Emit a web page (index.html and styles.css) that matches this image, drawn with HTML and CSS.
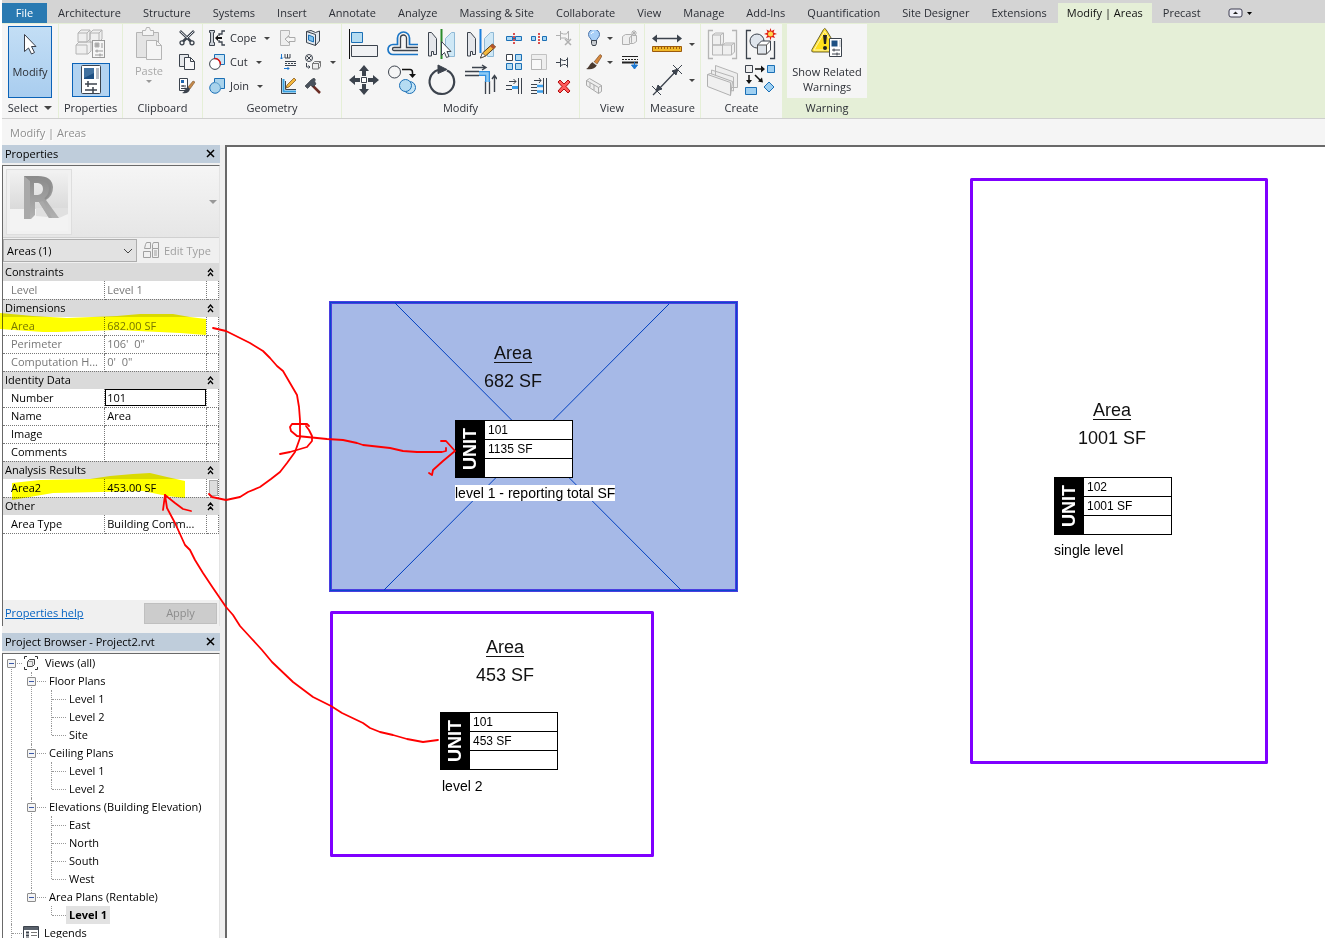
FILE: index.html
```html
<!DOCTYPE html>
<html lang="en">
<head>
    <meta charset="UTF-8">
    <meta name="viewport" content="width=device-width, initial-scale=1.0">
    <title>Project2.rvt</title>
    <link rel="stylesheet" href="styles.css">
</head>
<body>
<div class="app">
    <nav class="tabs">
        <a href="#" class="file">File</a>
        <a href="#">Architecture</a>
        <a href="#">Structure</a>
        <a href="#">Systems</a>
        <a href="#">Insert</a>
        <a href="#">Annotate</a>
        <a href="#">Analyze</a>
        <a href="#">Massing &amp; Site</a>
        <a href="#">Collaborate</a>
        <a href="#">View</a>
        <a href="#">Manage</a>
        <a href="#">Add-Ins</a>
        <a href="#">Quantification</a>
        <a href="#">Site Designer</a>
        <a href="#">Extensions</a>
        <a href="#" class="active">Modify | Areas</a>
        <a href="#">Precast</a>
        <button class="collapse" aria-label="Minimize ribbon">
            <svg width="26" height="10" viewBox="0 0 26 10"><rect x="1" y="1" width="13" height="8" rx="2" fill="#f0f0f8" stroke="#3c3c50"/><path d="M5 6h5L7.500 3.500z" fill="#222"/><path d="M19 4h5l-2.500 3z" fill="#000"/></svg>
        </button>
    </nav>

    <div class="ribbon">
        <section class="panel select">
            <div class="body">
                <button class="modify">
                    <svg width="32" height="32" viewBox="0 0 32 32"><path d="M10.500 7.500v17l4-3.500 3 6 3-1.500-3-6h4.500z" fill="#fff" stroke="#3a3f4a"/></svg>
                    <span>Modify</span>
                </button>
            </div>
            <h2>Select <i class="arrow big"></i></h2>
        </section>

        <section class="panel props">
            <div class="body large one">
                <button aria-label="Type Properties" disabled>
                    <svg width="32" height="32" viewBox="0 0 32 32"><g fill="#efefef" stroke="#b4b4b4"><path d="M3 5l3-3h9v9l-3 3H3zM15 5l3-3h9v9l-3 3h-9zM1 17l3-3h12v9l-3 3H1z"/><path d="M3 5h9v9M12 5l3-3M15 5h9v9M24 5l3-3M1 17h11v9" fill="none"/><rect x="17.500" y="12.500" width="12" height="17" fill="#f6f6f6" stroke="#999"/><path d="M20 15h4v4h-4z" fill="#aaa"/><path d="M27 15v5M20 23h8M22 21.500v3M20 27h8M25 25.500v3" stroke="#999"/></g></svg>
                </button>
                <button class="on" aria-label="Properties">
                    <svg width="32" height="32" viewBox="0 0 32 32"><rect x="6.500" y="1.500" width="19" height="28" rx="1" fill="#fff" stroke="#3c434d"/><path d="M9 4h10v11H9z" fill="#1e5083"/><path d="M9 4h10v5l-10 5z" fill="#41719f"/><path d="M21 4h3v11h-3z" fill="#b7bcc4"/><path d="M10 20h12M13 17v6M10 26h12M18 23v6" stroke="#3c434d" stroke-width="1.500"/></svg>
                </button>
            </div>
            <h2>Properties</h2>
        </section>

        <section class="panel clip">
            <div class="body">
                <button class="paste" disabled>
                    <svg width="32" height="36" viewBox="0 0 32 36"><path d="M3.500 6.500h22v25h-22z" fill="#e4e4e4" stroke="#b5b5b5"/><path d="M9.500 4.500h3l1-3h3l1 3h3v5h-11z" fill="#f4f4f4" stroke="#b5b5b5"/><path d="M13.500 14.500h10l5 5v14h-15z" fill="#f5f5f5" stroke="#b5b5b5"/><path d="M23.500 14.500v5h5" fill="none" stroke="#b5b5b5"/></svg>
                    <span>Paste</span>
                    <i class="arrow"></i>
                </button>
                <div class="small">
                    <button aria-label="Cut to clipboard"><svg width="16" height="16" viewBox="0 0 16 16"><path d="M1 1l11 10.500M15 1L4 11.500" stroke="#3c434d" stroke-width="2.600"/><path d="M1.500 1.500l7 6.500M14.500 1.500L8 8" stroke="#e6e9ee"/><circle cx="3" cy="12.800" r="2" fill="none" stroke="#3c434d" stroke-width="1.300"/><circle cx="13" cy="12.800" r="2" fill="none" stroke="#3c434d" stroke-width="1.300"/></svg></button>
                    <button aria-label="Copy to clipboard"><svg width="16" height="16" viewBox="0 0 16 16"><path d="M.5.500h9v12h-9z" fill="#e6e8eb" stroke="#3c434d"/><path d="M5.500 3.500h6l4 4v8h-10z" fill="#f7f7f9" stroke="#3c434d"/><path d="M11.500 3.500v4h4" fill="none" stroke="#3c434d"/></svg></button>
                    <button aria-label="Match type"><svg width="16" height="16" viewBox="0 0 16 16"><path d="M.5.500h8v12h-8z" fill="#fff" stroke="#3c434d"/><path d="M2 2h3v3H2z" fill="#1e66b0"/><path d="M2 8h5M2 10.500h5M4 7v2M6 9.500v2" stroke="#3c434d"/><path d="M9 9l5-6 2 1-5 7z" fill="#c58a4a" stroke="#6b4420" stroke-width=".5"/><path d="M3 15c3-1 3-5 6-6l2 2c-1 4-4 5-8 4z" fill="#3c434d"/></svg></button>
                </div>
            </div>
            <h2>Clipboard</h2>
        </section>

        <section class="panel geom">
            <div class="body">
                <div class="small named">
                    <button><svg width="16" height="16" viewBox="0 0 16 16"><path d="M.5.500h5v2h-1v10h1v3h-5v-3h1v-10h-1z" fill="#cdd2d8" stroke="#3c434d"/><path d="M16 1h-3v3h-3v2M10 10v2h3v3h3" fill="none" stroke="#3c434d" stroke-width="1.300"/><path d="M6 8l3-3v2h4v2H9v2z" fill="#111"/></svg>Cope<i class="arrow"></i></button>
                    <button><svg width="16" height="16" viewBox="0 0 16 16"><path d="M5.500.500h10v10h-10z" fill="#c9e4f5" stroke="#1b6fb5"/><circle cx="6" cy="10" r="5.400" fill="#fff" stroke="#3c434d"/><path d="M5.500 4.600a5.400 5.400 0 0 1 5.900 5.900" fill="none" stroke="#e01010" stroke-width="1.400"/></svg>Cut<i class="arrow"></i></button>
                    <button><svg width="16" height="16" viewBox="0 0 16 16"><path d="M5.500.500h10v10h-4a5.400 5.400 0 1 1-6-6z" fill="#a9d3ec" stroke="#1b6fb5"/><path d="M5.500 4.600a5.400 5.400 0 0 1 5.900 5.900" fill="none" stroke="#5a9fcb"/></svg>Join<i class="arrow"></i></button>
                </div>
                <div class="small">
                    <button aria-label="Join roof" disabled><svg width="16" height="16" viewBox="0 0 16 16"><path d="M.5.500h9v4l-3 3.500 3 4v3.500h-9z" fill="#eee" stroke="#b5b5b5"/><path d="M5 9l4-3v1.500h6v4H9V13z" fill="#f5f5f5" stroke="#aaa"/></svg></button>
                    <button aria-label="Beam joins"><svg width="16" height="16" viewBox="0 0 16 16"><path d="M1.500 0v5M0 3.500L1.500 5 3 3.500M4 14.500h5M7.500 13L9 14.500 7.500 16" fill="none" stroke="#1b76d0"/><path d="M5 0v4h5V0M7.500 0v4M5 7.500h11M5 11.500h11" fill="none" stroke="#3c434d"/><path d="M5 9.500h11" stroke="#3c434d" stroke-dasharray="2 1"/></svg></button>
                    <button aria-label="Wall joins"><svg width="16" height="16" viewBox="0 0 16 16"><path d="M1.500 0v15.500H16M5.500 3v8.500H16" fill="none" stroke="#3c434d"/><path d="M3.500 1v12.500H16" fill="none" stroke="#36a0e0" stroke-width="2"/><path d="M6 10l1-3 7-7 2 2-7 7z" fill="#f5b83c" stroke="#7a4b10" stroke-width=".7"/></svg></button>
                </div>
                <div class="small">
                    <button aria-label="Split face"><svg width="16" height="16" viewBox="0 0 16 16"><path d="M1.500 1.500l9 3v11l-9-3zM1.500 1.500L6 .5l4.500 2 4-1.500v10l-4 4.500" fill="#e2e8ef" stroke="#3c434d"/><path d="M3.500 5l5 2v5l-5-2z" fill="#7cc0ee" stroke="#1b6fb5"/></svg></button>
                    <button aria-label="Paint"><svg width="16" height="16" viewBox="0 0 16 16"><circle cx="4" cy="4" r="3.500" fill="#eee" stroke="#3c434d"/><path d="M2 2l4 4M6 2L2 6M1.500 9v4H5M3.500 11.500L5 13l-1.500 1.500" fill="none" stroke="#3c434d"/><path d="M7.500 9.500l2-2h6v5l-2 2.500h-6z" fill="#eee" stroke="#777"/><path d="M7.500 9.500h6v5M13.500 9.500l2-2" fill="none" stroke="#777"/></svg></button>
                    <button aria-label="Demolish"><svg width="16" height="16" viewBox="0 0 16 16"><path d="M7 7l8 8" stroke="#6b2d25" stroke-width="2.500"/><path d="M0 8l6-6 3-2 1.500 2-1 1 1.500 3-3 3-2-2-3.500 3.500z" fill="#4a525c" stroke="#2c3138" stroke-width=".6"/></svg></button>
                </div>
                <div class="small drop">
                    <span></span>
                    <button aria-label="More paint"><i class="arrow"></i></button>
                </div>
            </div>
            <h2>Geometry</h2>
        </section>

        <section class="panel edit">
            <div class="body">
                <div class="large four">
                    <button aria-label="Align"><svg width="32" height="32" viewBox="0 0 32 32"><path d="M1.500 1v30" stroke="#111"/><path d="M3.500 4.500h11v10h-11z" fill="#b5dcf2" stroke="#1b6fb5"/><path d="M3.500 17.500h26v11h-26z" fill="#f0f1f3" stroke="#3c434d"/></svg></button>
                    <button aria-label="Offset"><svg width="32" height="32" viewBox="0 0 32 32"><path d="M31 26.500H6a5 5 0 0 1 0-10h4.500V10a6 6 0 0 1 12 0v6.500H31" fill="none" stroke="#1b76c6" stroke-width="1.700"/><path d="M31 22.500H7c-2 0-2-3 0-3h6.500V10a2.700 2.700 0 0 1 6 0v9.500H31" fill="none" stroke="#3c434d" stroke-width="1.300"/></svg></button>
                    <button aria-label="Mirror - Pick Axis"><svg width="32" height="32" viewBox="0 0 32 32"><path d="M2.500 4.500h3l5 6v16h-3v-3h-2v4.500h-3z" fill="#e4e6ea" stroke="#3c434d"/><path d="M28.500 4.500h-3l-6 6v16h3v2h6z" fill="#cfe8f6" stroke="#8fb9d6"/><path d="M15.500 1v30" stroke="#2b8c2b" stroke-width="2"/><path d="M15.500 13.500v14l3-3 2 5 2.500-1-2-5h4z" fill="#fff" stroke="#3c434d"/></svg></button>
                    <button aria-label="Mirror - Draw Axis"><svg width="32" height="32" viewBox="0 0 32 32"><path d="M2.500 4.500h3l5 6v16h-3v-3h-2v4.500h-3z" fill="#e4e6ea" stroke="#3c434d"/><path d="M28.500 4.500h-3l-6 6v16h3v2h6z" fill="#cfe8f6" stroke="#8fb9d6"/><path d="M15.500 1v24" stroke="#1b7fdc" stroke-width="2"/><path d="M15.500 30l2-5 10-9 3 3-10 9z" fill="#f5b83c" stroke="#54381a"/><path d="M25 18l3 3 2.500-2-3-3z" fill="#b2532e"/><path d="M15.500 30l2-5 3 3z" fill="#fff" stroke="#333" stroke-width=".7"/></svg></button>
                    <button aria-label="Move"><svg width="32" height="32" viewBox="0 0 32 32"><path d="M16 1l5 6h-3v5h-4V7h-3zM16 31l5-6h-3v-5h-4v5h-3zM1 16l6-5v3h5v4H7v3zM31 16l-6-5v3h-5v4h5v3z" fill="#3c434d"/><path d="M13.500 13.500h5v5h-5z" fill="#fff" stroke="#3c434d"/></svg></button>
                    <button aria-label="Copy"><svg width="32" height="32" viewBox="0 0 32 32"><circle cx="7.500" cy="8" r="6" fill="#f5f5f5" stroke="#3c434d"/><path d="M15 5.500h8q2.500 0 2.500 3v3" fill="none" stroke="#111" stroke-width="1.500"/><path d="M22 10h7l-3.500 4z" fill="#111"/><circle cx="22.500" cy="23.500" r="6" fill="#c5e5f6" stroke="#1b6fb5"/><circle cx="18.500" cy="21.500" r="6" fill="#b5dcf2" stroke="#1b6fb5"/></svg></button>
                    <button aria-label="Rotate"><svg width="32" height="32" viewBox="0 0 32 32"><path d="M12 6a12.300 12.300 0 1 0 9 .5" fill="none" stroke="#3c434d" stroke-width="2.200"/><path d="M12 1l9 4.500-9 4z" fill="#3c434d" stroke="#3c434d"/></svg></button>
                    <button aria-label="Trim/Extend to Corner"><svg width="32" height="32" viewBox="0 0 32 32"><path d="M7 3.500h14M17 1l4 2.500L17 6M29.500 28V12M27 15l2.500-3.500L32 15" fill="none" stroke="#3c434d" stroke-width="1.400"/><path d="M0 7.500h14M0 11.500h14M20.500 17v13M24.500 17v13" stroke="#3c434d" stroke-width="1.300"/><path d="M14 9.500h8.500V18" fill="none" stroke="#2f8fe0" stroke-width="5"/><path d="M14 9.500h8.500V18" fill="none" stroke="#8ecbf5" stroke-width="2.500"/></svg></button>
                </div>
                <div class="small three">
                    <button aria-label="Split Element"><svg width="16" height="16" viewBox="0 0 16 16"><path d="M.5 6.500h6v4h-6zM9.500 6.500h6v4h-6z" fill="#a9d8f5" stroke="#1b6fb5"/><path d="M6 8.500h4" stroke="#1b6fb5"/><path d="M8 3v11" stroke="#d01818" stroke-width="1.500" stroke-dasharray="2 1"/></svg></button>
                    <button aria-label="Split with Gap"><svg width="16" height="16" viewBox="0 0 16 16"><path d="M.5 6.500h4v4h-4zM11.500 6.500h4v4h-4z" fill="#a9d8f5" stroke="#1b6fb5"/><path d="M8 3v11" stroke="#d01818" stroke-width="1.500" stroke-dasharray="2 1"/></svg></button>
                    <button aria-label="Unpin" disabled><svg width="16" height="16" viewBox="0 0 16 16"><path d="M0 5.500h4M4.500 1v9M4.500 3l3 1h3l2-3v9l-3-2h-5" fill="none" stroke="#b0b0b0"/><path d="M9 9l6 6M15 9l-6 6" stroke="#b0b0b0" stroke-width="1.500"/></svg></button>
                    <button aria-label="Array"><svg width="16" height="16" viewBox="0 0 16 16"><path d="M.5.500h6v6h-6z" fill="#fff" stroke="#3c434d"/><path d="M9.500.500h6v6h-6zM.5 9.500h6v6h-6zM9.500 9.500h6v6h-6z" fill="#b5dcf2" stroke="#1b6fb5"/></svg></button>
                    <button aria-label="Scale" disabled><svg width="16" height="16" viewBox="0 0 16 16"><path d="M.5.500h15v15H.5z" fill="#eee" stroke="#c2c2c2"/><path d="M.5 5.500h10v10h-10z" fill="#f8f8f8" stroke="#b5b5b5"/></svg></button>
                    <button aria-label="Pin"><svg width="16" height="16" viewBox="0 0 16 16"><path d="M0 8.500h4M4.500 4v9M4.500 5.500l3 1h2l2-2v8l-2-2h-2l-3 1M11.500 3.500v10" fill="none" stroke="#3c434d"/></svg></button>
                    <button aria-label="Trim Single"><svg width="16" height="16" viewBox="0 0 16 16"><path d="M3 3.500h7M7.500 1L10 3.500 7.500 6M0 7.500h6M0 11.500h6M12.500 0v16M15.500 0v16" fill="none" stroke="#3c434d"/><path d="M6 9.500h6" stroke="#3ba0ee" stroke-width="3"/></svg></button>
                    <button aria-label="Trim Multiple"><svg width="16" height="16" viewBox="0 0 16 16"><path d="M3 2.500h7M8 0l2 2.500L8 5M0 6.500h6M0 9.500h6M0 12.500h6M0 15.500h6M12.500 0v16M15.500 0v16" fill="none" stroke="#3c434d"/><path d="M6 8h6M6 13.500h6" stroke="#3ba0ee" stroke-width="2.500"/></svg></button>
                    <button aria-label="Delete"><svg width="16" height="16" viewBox="0 0 16 16"><path d="M2 4l2-2 4 4 4-4 2 2-4 4.500 4 4.500-2 2-4-4-4 4-2-2 4-4.500z" fill="#ff5a5a" stroke="#b01010"/></svg></button>
                </div>
            </div>
            <h2>Modify</h2>
        </section>

        <section class="panel view">
            <div class="body">
                <div class="small">
                    <button aria-label="Hide in View"><svg width="16" height="16" viewBox="0 0 16 16"><path d="M5.500 10.500c0-2-3-3-3-6a5 4.800 0 0 1 11 0c0 3-3 4-3 6z" fill="#a8cff7" stroke="#4a72a8"/><path d="M5 4q1-2 3-2" stroke="#fff" fill="none"/><path d="M5.500 10.500h5v3l-1 2h-3l-1-2z" fill="#c7cbd0" stroke="#3c434d"/></svg><i class="arrow"></i></button>
                    <button aria-label="Override Graphics"><svg width="16" height="16" viewBox="0 0 16 16"><path d="M8 8l6-7.500L16 2l-5 8z" fill="#d6893e" stroke="#6b3a14" stroke-width=".6"/><path d="M0 15c3-1 3-5 7-7l4 3c-2 4-6 5-11 4z" fill="#4a3a30"/><path d="M7 8l4 3" stroke="#ddd" stroke-width="1.500"/></svg><i class="arrow"></i></button>
                    <button aria-label="Displace" disabled><svg width="16" height="16" viewBox="0 0 16 16"><path d="M.5 2.500l3-2 12 7v6l-3 2-12-8z" fill="#eee" stroke="#aaa"/><path d="M.5 2.500l12 7v6M12.500 9.500l3-2M4 5v4M8 7v5" fill="none" stroke="#aaa"/></svg></button>
                </div>
                <div class="small">
                    <button aria-label="Selection Box" disabled><svg width="16" height="16" viewBox="0 0 16 16"><path d="M.5 6.500l3-2h6v8l-2 2h-7zM7.500 7.500l3-2h4v6l-3 2h-4z" fill="#eee" stroke="#b0b0b0"/><path d="M12 0v6M9 3h6M10 1l4 4M14 1l-4 4" stroke="#b0b0b0"/></svg></button>
                    <button aria-label="Linework"><svg width="16" height="16" viewBox="0 0 16 16"><path d="M0 2.500h16" stroke="#222"/><path d="M0 5.500h16" stroke="#222" stroke-dasharray="2 1"/><path d="M0 8.500h16" stroke="#222" stroke-width="2"/><path d="M12.500 8v6M9.500 11l3 4 3-4z" fill="#1b76d0" stroke="#1b76d0"/></svg></button>
                </div>
            </div>
            <h2>View</h2>
        </section>

        <section class="panel measure">
            <div class="body large one">
                <button aria-label="Measure"><svg width="32" height="32" viewBox="0 0 32 32"><path d="M3 10.500h26" stroke="#3c434d" stroke-width="1.500"/><path d="M1 10.500l5-4v8zM31 10.500l-5-4v8z" fill="#3c434d"/><path d="M1.500 18.500h29v5h-29z" fill="#f0b829" stroke="#9c5a0c"/><path d="M4.500 19v2M7.500 19v2M10.500 19v2M13.500 19v2M16.500 19v2M19.500 19v2M22.500 19v2M25.500 19v2M28.500 19v2" stroke="#9c5a0c"/></svg><i class="arrow"></i></button>
                <button aria-label="Aligned Dimension"><svg width="32" height="32" viewBox="0 0 32 32"><path d="M1 22l9 9M22 1l9 9" stroke="#3c434d"/><path d="M7 26L26 6M2 31l5-5" stroke="#3c434d" stroke-width="1.300"/><path d="M5 27l2-6 4 4zM27 5l-2 6-4-4zM26 6l5-5" fill="#3c434d" stroke="#3c434d"/></svg><i class="arrow"></i></button>
            </div>
            <h2>Measure</h2>
        </section>

        <section class="panel create">
            <div class="body large two">
                <button aria-label="Create Assembly" disabled><svg width="32" height="32" viewBox="0 0 32 32"><path d="M7 2.500H2.500v28H7M26 2.500h4.500v28H26" fill="none" stroke="#b5b5b5" stroke-width="1.300"/><path d="M6.500 7l3-2h8v9l-1 3h-10zM6.500 17h10v10h-10zM16.500 17l3-2h9v9l-3 3h-9z" fill="#efefef" stroke="#b5b5b5"/><path d="M6.500 7h8v10M14.500 7l3-2M16.500 17h9v10M25.500 17l3-2" fill="none" stroke="#b5b5b5"/></svg></button>
                <button aria-label="Create Group"><svg width="32" height="32" viewBox="0 0 32 32"><path d="M6 2.500H1.500v28H6M25 30.500h4.500V13" fill="none" stroke="#3c434d" stroke-width="1.300"/><circle cx="12" cy="13" r="7" fill="#dfe5ec" stroke="#3c434d"/><path d="M12.500 17l4-4h9v9l-4 4h-9z" fill="#fff" stroke="#3c434d"/><path d="M21.500 17v9h-9v-9z" fill="#dfe4ea" stroke="#555"/><path d="M21.500 17l4-4" stroke="#555"/><path d="M25.500 0l1 3 3-1.500-1 3L32 6l-3.500 1 1.500 3-3.500-1-1 3.500-1-3.500-3.500 1 1.500-3L19 6l3.500-1.500-1-3 3 1.500z" fill="#e01c10"/><circle cx="25.500" cy="6" r="2.500" fill="#ffd64a"/></svg></button>
                <button aria-label="Create Parts" disabled><svg width="32" height="32" viewBox="0 0 32 32"><path d="M9.500 1.500l22 8v14h-22zM5.500 6l22 7v14l-22-6z" fill="#eee" stroke="#b5b5b5"/><path d="M1.500 10.500l3-1 22 8-2 14-23-9z" fill="#f0f0f0" stroke="#b0b0b0"/><path d="M1.500 10.500l23 8v13" fill="none" stroke="#b0b0b0"/></svg></button>
                <button aria-label="Create Similar"><svg width="32" height="32" viewBox="0 0 32 32"><path d="M.5 1.500h7v7h-7z" fill="#eee" stroke="#3c434d"/><path d="M22.500 1.500h7v7h-7zM.5 23.500h11v7h-11zM24 18l5 5-5 5-5-5z" fill="#9fd0f2" stroke="#1b6fb5"/><path d="M10 5h8M4 11v6M10 11l5 5" stroke="#111" stroke-width="1.500"/><path d="M20 5l-4-3.500v7zM4 20l-3-4h6zM18 18.500l-5-1 4-4z" fill="#111"/></svg></button>
            </div>
            <h2>Create</h2>
        </section>

        <section class="panel warning">
            <div class="body">
                <button class="warn">
                    <svg width="32" height="32" viewBox="0 0 32 32"><path d="M12.500 3.500q1-2 2.500 0l12 20q.5 2.500-1.500 2.500H2q-2 0-1-2.500z" fill="#ffe12e" stroke="#6b6330"/><path d="M13.700 5.500L25 24H3z" fill="#ffdf1c" stroke="#fff6b0"/><path d="M12 9h4l-1 9h-2z" fill="#222"/><circle cx="14" cy="22" r="2" fill="#222"/><path d="M18.500 12.500h12v18h-12z" fill="#fff" stroke="#3c434d"/><path d="M20.500 14.500h6v6h-6z" fill="#1e5083"/><path d="M29 14v7" stroke="#b7bcc4"/><path d="M21 24h8M23 22.500v3M21 28h8M26 26.500v3" stroke="#3c434d"/></svg>
                    <span>Show Related<br>Warnings</span>
                </button>
            </div>
            <h2>Warning</h2>
        </section>
    </div>

    <div class="options">Modify | Areas</div>

    <div class="workspace">
        <aside class="sidebar">
            <section class="palette">
                <header><h3>Properties</h3><button aria-label="Close properties"><svg width="10" height="10" viewBox="0 0 10 10"><path d="M1 1l7 7M8 1L1 8" stroke="#000" stroke-width="1.500"/></svg></button></header>
                <div class="frame">
                    <button class="type" aria-label="Type selector">
                        <svg class="thumb" width="66" height="66" viewBox="0 0 66 66">
                            <defs>
                                <linearGradient id="wall" x1="0" y1="0" x2="0" y2="1"><stop offset="0" stop-color="#f0f0f0"/><stop offset="1" stop-color="#dadada"/></linearGradient>
                                <linearGradient id="face" x1="0" y1="0" x2="0" y2="1"><stop offset="0" stop-color="#8a8a8a"/><stop offset="1" stop-color="#b2b2b2"/></linearGradient>
                            </defs>
                            <rect x=".5" y=".5" width="65" height="65" fill="#f1f1f1" stroke="#dedede"/>
                            <path d="M4 4h58v36H4z" fill="url(#wall)"/>
                            <path d="M4 40h58v22H4z" fill="#f3f3f3"/>
                            <path d="M30 47l23 2 9-4v-6H30z" fill="#e0e0e0"/>
                            <path d="M18 7h14q14 0 15 11 0 9-7 13l13 18H43L33 33h-4v13l-4 4h-7zM28 14v12h4q5-1 5-6 0-5-5-6z" fill="url(#face)" fill-rule="evenodd"/>
                            <path d="M18 7l6 5v38h-6zM33 33l4-1 9 17h-3z" fill="#a9a9a9"/>
                            <path d="M24 12l8-2q12 1 12 9 0 7-5 11" fill="none" stroke="#8e8e8e" stroke-width="2"/>
                        </svg>
                        <i class="arrow big"></i>
                    </button>
                    <div class="filter">
                        <div class="dropdown">
                            <select aria-label="Selection filter"><option>Areas (1)</option></select>
                            <svg width="10" height="6" viewBox="0 0 10 6"><path d="M1 1l4 4 4-4" fill="none" stroke="#444"/></svg>
                        </div>
                        <button class="edit-type" disabled><svg width="17" height="17" viewBox="0 0 17 17"><path d="M2.500 2.500l1-2h4v6h-6zM9.500 2.500l1-2h5v6h-6zM.5 9.500h7v6h-7z" fill="none" stroke="#a0a0a0"/><path d="M9.500 6.500h6v9h-6z" fill="#f0f0f0" stroke="#a0a0a0"/><path d="M11 9h3M11 11h3M11 13h3" stroke="#a0a0a0"/></svg>Edit Type</button>
                    </div>
                    <div class="rows">
                        <table>
                            <tbody>
                                <tr class="group"><th colspan="2">Constraints</th><td><svg width="7" height="9" viewBox="0 0 7 9"><path d="M1 4l2.500-3L6 4M1 8l2.500-3L6 8" fill="none" stroke="#000" stroke-width="1.300"/></svg></td></tr>
                                <tr class="locked"><th>Level</th><td>Level 1</td><td></td></tr>
                                <tr class="group"><th colspan="2">Dimensions</th><td><svg width="7" height="9" viewBox="0 0 7 9"><path d="M1 4l2.500-3L6 4M1 8l2.500-3L6 8" fill="none" stroke="#000" stroke-width="1.300"/></svg></td></tr>
                                <tr class="locked"><th>Area</th><td>682.00 SF</td><td></td></tr>
                                <tr class="locked"><th>Perimeter</th><td>106'&nbsp; 0"</td><td></td></tr>
                                <tr class="locked"><th>Computation H...</th><td>0'&nbsp; 0"</td><td></td></tr>
                                <tr class="group"><th colspan="2">Identity Data</th><td><svg width="7" height="9" viewBox="0 0 7 9"><path d="M1 4l2.500-3L6 4M1 8l2.500-3L6 8" fill="none" stroke="#000" stroke-width="1.300"/></svg></td></tr>
                                <tr><th><label for="number">Number</label></th><td class="editing"><input id="number" type="text" value="101"></td><td></td></tr>
                                <tr><th>Name</th><td>Area</td><td></td></tr>
                                <tr><th>Image</th><td></td><td></td></tr>
                                <tr><th>Comments</th><td></td><td></td></tr>
                                <tr class="group"><th colspan="2">Analysis Results</th><td><svg width="7" height="9" viewBox="0 0 7 9"><path d="M1 4l2.500-3L6 4M1 8l2.500-3L6 8" fill="none" stroke="#000" stroke-width="1.300"/></svg></td></tr>
                                <tr><th>Area2</th><td>453.00 SF</td><td><button class="assoc" aria-label="Associate parameter"></button></td></tr>
                                <tr class="group"><th colspan="2">Other</th><td><svg width="7" height="9" viewBox="0 0 7 9"><path d="M1 4l2.500-3L6 4M1 8l2.500-3L6 8" fill="none" stroke="#000" stroke-width="1.300"/></svg></td></tr>
                                <tr><th>Area Type</th><td>Building Comm...</td><td></td></tr>
                            </tbody>
                        </table>
                    </div>
                    <div class="foot"><a href="#">Properties help</a><button disabled>Apply</button></div>
                </div>
            </section>

            <section class="palette browser">
                <header><h3>Project Browser - Project2.rvt</h3><button aria-label="Close project browser"><svg width="10" height="10" viewBox="0 0 10 10"><path d="M1 1l7 7M8 1L1 8" stroke="#000" stroke-width="1.500"/></svg></button></header>
                <div class="frame">
                    <ul class="tree">
                        <li>
                            <div class="node"><button class="toggle" aria-label="Collapse"></button><svg width="16" height="16" viewBox="0 0 16 16"><path d="M4 1.500H1.500V4M12 1.500h2.500V4M4 14.500H1.500V12M12 14.500h2.500V12" fill="none" stroke="#333"/><path d="M4.500 6.500l2-2h5v5l-2 2h-5z" fill="#eee" stroke="#444"/><path d="M4.500 6.500h5v5" fill="none" stroke="#999"/></svg>Views (all)</div>
                            <ul>
                                <li>
                                    <div class="node"><button class="toggle" aria-label="Collapse"></button>Floor Plans</div>
                                    <ul>
                                        <li><a href="#">Level 1</a></li>
                                        <li><a href="#">Level 2</a></li>
                                        <li><a href="#">Site</a></li>
                                    </ul>
                                </li>
                                <li>
                                    <div class="node"><button class="toggle" aria-label="Collapse"></button>Ceiling Plans</div>
                                    <ul>
                                        <li><a href="#">Level 1</a></li>
                                        <li><a href="#">Level 2</a></li>
                                    </ul>
                                </li>
                                <li>
                                    <div class="node"><button class="toggle" aria-label="Collapse"></button>Elevations (Building Elevation)</div>
                                    <ul>
                                        <li><a href="#">East</a></li>
                                        <li><a href="#">North</a></li>
                                        <li><a href="#">South</a></li>
                                        <li><a href="#">West</a></li>
                                    </ul>
                                </li>
                                <li>
                                    <div class="node"><button class="toggle" aria-label="Collapse"></button>Area Plans (Rentable)</div>
                                    <ul>
                                        <li><a href="#" class="current">Level 1</a></li>
                                    </ul>
                                </li>
                            </ul>
                        </li>
                        <li>
                            <div class="node leaf"><svg width="16" height="16" viewBox="0 0 16 16"><path d="M.5 1.500h15v14H.5z" fill="#fff" stroke="#3c434d"/><path d="M1 2h14v3H1z" fill="#5a626c"/><path d="M3 7.500h3M3 10.500h3M3 13.500h3" stroke="#3c434d" stroke-width="2"/><path d="M8 7.500h6M8 10.500h6M8 13.500h6" stroke="#777"/></svg>Legends</div>
                        </li>
                    </ul>
                </div>
            </section>
        </aside>

        <main class="canvas">
            <svg class="plan" width="100%" height="100%">
                <rect x="103.500" y="155.500" width="406" height="288" fill="#a6b9e7" stroke="#4a3fe0" stroke-width="3"/>
                <rect x="103.500" y="155.500" width="406" height="288" fill="none" stroke="#0a46cc"/>
                <path d="M168 156l286 287M442 157L157 443" stroke="#0040c0" fill="none"/>
                <rect x="104.500" y="465.500" width="321" height="243" fill="none" stroke="#7f00ff" stroke-width="3" stroke-linejoin="round"/>
                <rect x="744.500" y="32.500" width="295" height="583" fill="none" stroke="#7f00ff" stroke-width="3" stroke-linejoin="round"/>
            </svg>

            <div class="room room-a"><u>Area</u><br>682 SF</div>
            <div class="tag tag-a">
                <b>UNIT</b>
                <span>101</span><span>1135 SF</span><span></span>
            </div>
            <p class="note note-a">level 1 - reporting total SF</p>

            <div class="room room-b"><u>Area</u><br>453 SF</div>
            <div class="tag tag-b">
                <b>UNIT</b>
                <span>101</span><span>453 SF</span><span></span>
            </div>
            <p class="note note-b">level 2</p>

            <div class="room room-c"><u>Area</u><br>1001 SF</div>
            <div class="tag tag-c">
                <b>UNIT</b>
                <span>102</span><span>1001 SF</span><span></span>
            </div>
            <p class="note note-c">single level</p>
        </main>
    </div>

    <!-- highlighter and red pen -->
    <svg class="markup highlight" width="100%" height="100%">
        <path d="M0 313L33 316 67 318 117 316 140 314 173 314 190 317 206 319V335L180 333 117 330 57 332 43 332 0 329zM12 483L40 480 90 479 110 476 133 474 150 473 167 477 185 481V498L167 496 143 491 100 492 53 493 12 500z" fill="#ff0"/>
    </svg>
    <svg class="markup" width="100%" height="100%">
        <g fill="none" stroke="#f00" stroke-width="1.800" stroke-linejoin="round" stroke-linecap="round">
            <path d="M213 328L226 331 238 337 250 343 263 351 270 358 277 366 283 371 290 383 297 395 299 407 300 420 300 438 295 452 287 463 280 472 271 479 260 487 248 492 240 497 226 500 212 497 209 494"/>
            <path d="M280 454L290 452 307 447 312 441 312 436 309 430 306 426"/>
            <path d="M309 426L307 424 292 424 290 427 291 431 297 436 317 438 327 439 343 440 357 443 363 445 390 448 403 451 417 452 442 452 446 451V448"/>
            <path d="M441 441L446 441 455 451 443 461 433 470 432 475 429 473"/>
            <path d="M438 740L423 742 407 739 393 735 380 732 370 728 363 723 342 713 331 706 313 697 293 682 272 662 262 650 251 638 240 626 233 615 226 607 213 588 203 573 195 560 190 550 185 545 175 523 167 508 165 495"/>
            <path d="M163 510L165 495 175 503 183 509 191 511"/>
        </g>
    </svg>
</div>
</body>
</html>
```
FILE: styles.css
```css
* {
    box-sizing: border-box;
}
body {
    margin: 0;
    font-family: "Open Sans", "Noto Sans", sans-serif;
    font-size: 11px;
    line-height: 18px;
    color: #000;
    background: #fff;
}
h2, h3, p, ul {
    margin: 0;
    padding: 0;
    font-size: 11px;
    font-weight: normal;
}
button, input, select {
    font: inherit;
    color: inherit;
    background: none;
    border: none;
    padding: 0;
    margin: 0;
}
svg {
    display: block;
    flex: none;
}
.app {
    position: relative;
    display: flex;
    flex-direction: column;
    height: 100vh;
    overflow: hidden;
    padding-left: 2px;
}

/* ribbon tabs */
.tabs {
    display: flex;
    align-items: flex-end;
    height: 23px;
    background: #d4d4d4;
}
.tabs a {
    padding: 0 11px;
    line-height: 20px;
    color: #2c2f36;
    text-decoration: none;
    white-space: nowrap;
}
.tabs .file {
    width: 45px;
    padding: 0;
    text-align: center;
    color: #fff;
    background: #2a7ab2;
}
.tabs .active {
    padding: 0 9px;
    background: #e5efd7;
    color: #111;
}
.collapse {
    height: 20px;
    margin-left: 16px;
}

/* ribbon */
.ribbon {
    display: flex;
    height: 95px;
    background: #e5efd7;
}
.panel {
    display: flex;
    flex-direction: column;
    flex: none;
    padding-top: 2px;
    background: #f5f5f5;
    border-right: 1px solid #e5efd7;
    border-top: 1px solid #e5efd7;
}
.panel h2 {
    display: flex;
    align-items: center;
    justify-content: center;
    height: 20px;
    color: #2c2f36;
}
.panel .body {
    display: flex;
    justify-content: center;
    height: 72px;
}
.panel button {
    display: flex;
    align-items: center;
    color: #2c2f36;
}
.panel button:disabled {
    color: #a8a8a8;
}
.arrow {
    border: 3px solid transparent;
    border-top-color: #444;
    border-bottom: none;
}
.arrow.big {
    border-width: 4px 4px 0;
    margin-left: 6px;
}
.small {
    display: grid;
    grid-template-rows: repeat(3, 24px);
    align-content: start;
}
.panel .large {
    display: grid;
    grid-auto-rows: 36px;
    align-items: center;
    justify-content: center;
    gap: 0 7px;
}
.large.two {
    grid-template-columns: repeat(2, 32px);
}
.large.four {
    grid-template-columns: repeat(4, 32px);
}
.select {
    width: 57px;
}
.panel .modify {
    flex-direction: column;
    justify-content: flex-start;
    gap: 4px;
    width: 44px;
    background: linear-gradient(#c3def5, #a9cdef);
    border: 1px solid #0b63b8;
}
.props {
    width: 64px;
}
.props .on {
    justify-content: center;
    width: 38px;
    height: 34px;
    background: #b2d3f1;
    border: 1px solid #0b63b8;
}
.props button {
    justify-self: center;
}
.clip {
    width: 80px;
}
.clip .body {
    gap: 14px;
    padding-left: 3px;
}
.panel .paste {
    flex-direction: column;
}
.paste .arrow {
    border-top-color: #999;
}
.geom {
    width: 139px;
}
.geom .body {
    gap: 9px;
    padding-left: 1px;
}
.named {
    width: 62px;
}
.named button {
    gap: 5px;
}
.named .arrow {
    margin-left: 3px;
}
.edit {
    width: 238px;
}
.edit .body {
    gap: 9px;
    padding-right: 2px;
}
.three {
    grid-template-columns: repeat(3, 16px);
    column-gap: 9px;
}
.view {
    width: 65px;
}
.view .body {
    gap: 9px;
}
.view button {
    gap: 5px;
}
.measure {
    width: 56px;
}
.measure button {
    gap: 6px;
}
.create {
    width: 82px;
}
.warning {
    width: 81px;
    margin-left: 4px;
}
.panel .warn {
    flex-direction: column;
    line-height: 15px;
    gap: 6px;
}
.warning h2 {
    background: #e5efd7;
}

.options {
    height: 27px;
    padding-left: 8px;
    line-height: 27px;
    color: #8e8e8e;
    background: #f5f5f5;
    border-top: 1px solid #cfcfcf;
    text-shadow: 1px 1px #fff;
}

/* palettes */
.workspace {
    display: flex;
    flex: 1;
    min-height: 0;
    background: #f0f0f0;
}
.sidebar {
    display: flex;
    flex-direction: column;
    gap: 7px;
    width: 218px;
    margin-right: 5px;
    flex: none;
}
.palette header {
    display: flex;
    align-items: center;
    justify-content: space-between;
    height: 18px;
    padding: 0 4px 0 3px;
    line-height: 20px;
    background: #bfcddb;
}
.palette .frame {
    margin-top: 2px;
    border-top: 1px solid #696969;
    border-left: 1px solid #696969;
    border-right: 1px solid #e3e3e3;
}
.type {
    display: flex;
    align-items: center;
    justify-content: space-between;
    width: 100%;
    height: 72px;
    padding: 0 2px 0 3px;
    background: linear-gradient(#f5f5f5, #e6e6e6);
    border-bottom: 1px solid #d0d0d0;
}
.type .arrow {
    border-top-color: #999;
}
.filter {
    display: flex;
    align-items: center;
    gap: 6px;
    height: 25px;
}
.dropdown {
    display: grid;
    align-items: center;
    width: 134px;
}
.dropdown > * {
    grid-area: 1 / 1;
}
.dropdown select {
    appearance: none;
    height: 23px;
    padding-left: 3px;
    background: #e2e2e2;
    border: 1px solid #adadad;
}
.dropdown svg {
    justify-self: end;
    margin-right: 4px;
    pointer-events: none;
}
.edit-type {
    display: flex;
    align-items: center;
    gap: 4px;
    color: #a0a0a0;
}
.rows {
    min-height: 337px;
    background: #fff;
}
.rows table {
    width: 100%;
    table-layout: fixed;
    border-collapse: collapse;
}
.rows th, .rows td {
    height: 18px;
    padding: 0 0 0 2px;
    line-height: 16px;
    text-align: left;
    font-weight: normal;
    white-space: nowrap;
    border-bottom: 1px dotted #777;
    border-right: 1px dotted #777;
}
.rows th {
    width: 103px;
    padding-left: 8px;
}
.rows td:last-child {
    width: 12px;
}
.rows .group th, .rows .group td {
    background: #dadada;
    border: none;
}
.rows .group th {
    width: auto;
    padding-left: 2px;
}
.rows .group td {
    padding: 0;
}
.rows .locked {
    color: #777;
}
.rows .editing {
    padding: 0;
}
.rows input {
    display: block;
    width: 100%;
    height: 17px;
    padding-left: 1px;
    border: 1px solid #000;
}
.rows .assoc {
    display: block;
    width: 9px;
    height: 16px;
    background: #ddd;
    border: 1px solid #aaa;
}
.foot {
    display: flex;
    align-items: center;
    justify-content: space-between;
    height: 26px;
    padding: 0 2px;
}
.foot a {
    color: #0563c1;
}
.foot button {
    width: 73px;
    height: 21px;
    color: #8c8c8c;
    background: #ccc;
    border: 1px solid #bfbfbf;
}

/* project browser */
.browser {
    display: flex;
    flex-direction: column;
    flex: 1;
    min-height: 0;
}
.browser .frame {
    flex: 1;
    overflow: hidden;
    background: #fff;
}
.tree, .tree ul {
    list-style: none;
}
.tree ul {
    padding-left: 20px;
}
.tree {
    padding-left: 4px;
}
.tree li {
    position: relative;
    white-space: nowrap;
}
.tree li::before {
    content: "";
    position: absolute;
    left: 4px;
    top: 0;
    bottom: 0;
    border-left: 1px dotted #999;
}
.tree > li:first-child::before {
    top: 9px;
}
.tree ul > li:last-child::before {
    bottom: auto;
    height: 9px;
}
.node, .tree a {
    display: flex;
    align-items: center;
    height: 18px;
}
.node::before, .tree li li li::after {
    content: "";
    position: absolute;
    left: 5px;
    top: 9px;
    width: 14px;
    border-top: 1px dotted #999;
}
.node svg {
    margin: 0 5px 0 8px;
    background: #fff;
    z-index: 1;
}
.node.leaf {
    padding-left: 8px;
}
.toggle {
    position: relative;
    width: 9px;
    height: 9px;
    margin-right: 13px;
    background: linear-gradient(#3a58a8, #3a58a8) center / 5px 1px no-repeat #f4f4f4;
    border: 1px solid #8c8c8c;
    border-radius: 1px;
}
.toggle + svg {
    margin-left: -6px;
    margin-right: 6px;
}
.tree a {
    display: inline-flex;
    vertical-align: top;
    margin-left: 19px;
    padding: 0 3px;
    color: #000;
    text-decoration: none;
}
.tree .current {
    font-weight: bold;
    background: #e2e2e2;
}

/* drawing area */
.canvas {
    position: relative;
    flex: 1;
    overflow: hidden;
    font-family: "Liberation Sans", Arial, sans-serif;
    background: #fff;
    border-top: 2px solid #696969;
    border-left: 2px solid #696969;
}
.room {
    position: absolute;
    width: 120px;
    font-size: 18px;
    line-height: 28px;
    text-align: center;
    color: #111;
}
.room u {
    text-underline-offset: 3px;
}
.tag {
    position: absolute;
    display: grid;
    grid-template-columns: 30px 1fr;
    grid-template-rows: repeat(3, 19px);
    width: 118px;
    font-size: 12px;
    background: #fff;
    border-top: 1px solid #000;
}
.tag b {
    grid-row: 1 / 4;
    writing-mode: vertical-rl;
    transform: rotate(180deg);
    font-size: 18px;
    line-height: 30px;
    text-align: center;
    color: #fff;
    background: #000;
}
.tag span {
    grid-column: 2;
    padding-left: 3px;
    line-height: 18px;
    border-right: 1px solid #000;
    border-bottom: 1px solid #000;
}
.note {
    position: absolute;
    font-size: 14px;
    line-height: 16px;
    background: #fff;
}
.room-a { left: 226px; top: 192px; }
.tag-a { left: 228px; top: 273px; }
.note-a { left: 228px; top: 338px; }
.room-b { left: 218px; top: 486px; }
.tag-b { left: 213px; top: 565px; }
.note-b { left: 215px; top: 631px; }
.room-c { left: 825px; top: 249px; }
.tag-c { left: 827px; top: 330px; }
.note-c { left: 827px; top: 395px; }

.markup {
    position: absolute;
    left: 0;
    top: 0;
    pointer-events: none;
}
.highlight {
    mix-blend-mode: multiply;
}
```
